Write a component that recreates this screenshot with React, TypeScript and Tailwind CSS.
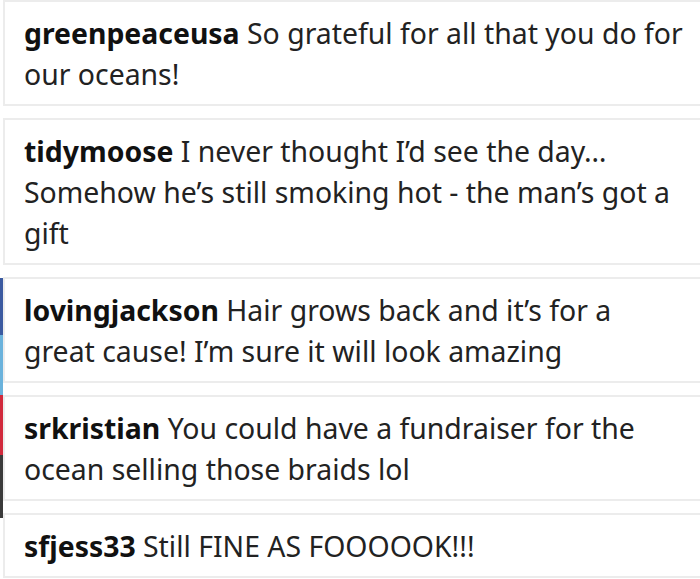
import React from 'react';

interface Comment {
  user: string;
  text: string;
}

const comments: Comment[] = [
  { user: 'greenpeaceusa', text: 'So grateful for all that you do for our oceans!' },
  { user: 'tidymoose', text: 'I never thought I’d see the day… Somehow he’s still smoking hot - the man’s got a gift' },
  { user: 'lovingjackson', text: 'Hair grows back and it’s for a great cause! I’m sure it will look amazing' },
  { user: 'srkristian', text: 'You could have a fundraiser for the ocean selling those braids lol' },
  { user: 'sfjess33', text: 'Still FINE AS FOOOOOK!!!' }
];

const CommentCard: React.FC<{ comment: Comment }> = ({ comment }) => (
  <div className="border-2 border-[#ececec] bg-white pl-[19px] pr-[15px] pt-[11px] pb-[9px]">
    <p className="text-[28.4px] leading-[41px] text-[#222]">
      <span className="font-bold text-[#111]">{comment.user}</span> {comment.text}
    </p>
  </div>
);

export default function App() {
  return (
    <div
      className="flex w-[700px] h-[579px] bg-white overflow-hidden"
      style={{ fontFamily: '"Noto Sans", "Open Sans", sans-serif' }}
    >
      <div className="flex flex-col w-[3px] shrink-0">
        <div className="h-[278px]" />
        <div className="h-[57px] bg-[#3b5aa0]" />
        <div className="h-[60px] bg-[#6ab2dc]" />
        <div className="h-[60px] bg-[#d12a3c]" />
        <div className="h-[63px] bg-[#3a3a3a]" />
      </div>
      <div className="flex flex-col gap-[12px] w-[700px] shrink-0">
        {comments.map((c) => (
          <CommentCard key={c.user} comment={c} />
        ))}
      </div>
    </div>
  );
}
